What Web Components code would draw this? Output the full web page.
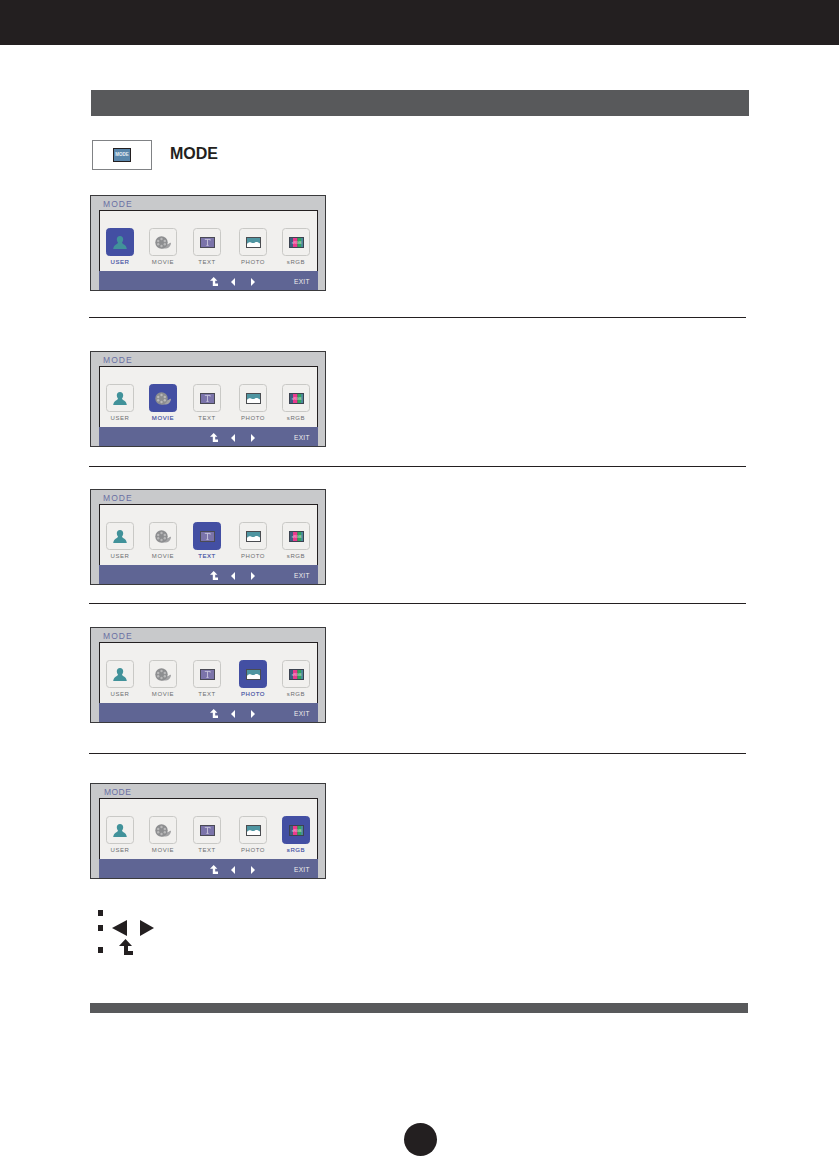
<!DOCTYPE html>
<html lang="en"><head><meta charset="utf-8"><title>MODE</title>
<style>
html,body{margin:0;padding:0;background:#fff;font-family:"Liberation Sans",Arial,sans-serif}
body{width:839px;height:1157px;overflow:hidden}
manual-page{display:block}
.m1{margin-top:25px}.s1{margin-top:26px}.m2{margin-top:33px}.s2{margin-top:19px}.m3{margin-top:22px}.s3{margin-top:18px}.m4{margin-top:23px}.s4{margin-top:30px}.m5{margin-top:29px;--title-space:.45px;--title-pad:5px}
</style></head><body>
<template id="t-tile"><style>
:host{display:flex;flex-direction:column;align-items:center;width:28px;position:relative}
.box{box-sizing:border-box;width:28px;height:28px;border:1px solid #c9c9c6;border-radius:3.5px;display:flex;align-items:center;justify-content:center;background:#f1f0ee}
:host([selected]) .box{background:#434fa3;border-color:#434fa3}
.lab{font:6px/8px "Liberation Sans",Arial,sans-serif;letter-spacing:.6px;color:#6d6e71;margin-top:2px;white-space:nowrap}
:host([selected]) .lab{color:#434fa3;-webkit-text-stroke:.15px #434fa3}
svg{display:block}
</style><div class="box"><slot></slot></div><div class="lab"></div></template>

<template id="t-osd"><style>
:host{display:block;box-sizing:border-box;width:236px;height:96px;margin-left:90px;border:1px solid #3a3a3c;background:#c8c9cb;padding:0 8px 0 8px}
.title{font:8.5px/16px "Liberation Sans",Arial,sans-serif;letter-spacing:var(--title-space,1.05px);color:#6a6fa3;height:14px;padding-left:var(--title-pad,4px)}
.panel{box-sizing:border-box;width:219px;height:80px;border:1px solid #231f20;border-bottom:0;background:#f1f0ee;display:flex;flex-direction:column}
.tiles{flex:none;padding-top:17px;padding-left:6px;display:flex;box-sizing:border-box;height:60px}
.foot{height:19px;background:#5f6594;margin:0 -1px;display:flex;align-items:center;padding-top:2px;box-sizing:border-box;position:relative;flex:none}
.foot svg{display:block;flex:none}
.up{margin-left:111px}.l{margin-left:13px}.r{margin-left:16px}
.exit{font:6.5px/8px "Liberation Sans",Arial,sans-serif;letter-spacing:.3px;color:#f1f0ee;margin-left:39px}
</style><div class="title">MODE</div><div class="panel"><div class="tiles"><slot></slot></div>
<div class="foot">
<svg class="up" width="8" height="9" viewBox="0 0 8 9"><path d="M3.7 0L7.4 3.8H5.2V6.6H8V9H2.8V3.8H0Z" fill="#fff"/></svg>
<svg class="l" width="4" height="8" viewBox="0 0 4 8"><path d="M4 0V8L0 4Z" fill="#fff"/></svg>
<svg class="r" width="4" height="8" viewBox="0 0 4 8"><path d="M0 0V8L4 4Z" fill="#fff"/></svg>
<span class="exit">EXIT</span></div></div></template>

<script>
const ICONS={
user:`<svg width="14" height="13" viewBox="0 0 14 13"><path d="M7 0C4.9 0 3.8 1.4 3.8 3.2C3.8 4.8 4.5 5.8 5 6.4C4.9 7.6 3.2 8.2 2 9.2C.9 10.1.4 11.4.2 13H13.8C13.6 11.4 13.1 10.1 12 9.2C10.8 8.2 9.1 7.6 9 6.4C9.5 5.8 10.2 4.8 10.2 3.2C10.2 1.4 9.1 0 7 0Z" fill="#41929a"/></svg>`,
movie:`<svg width="16" height="13" viewBox="0 0 16 13"><path d="M8 8C10 9 12.5 8.6 14 7.4C14.8 6.8 15.5 6.6 16 6.9C16 9.8 13.5 12.6 9.5 12.6H6.5Z" fill="#a3a3a5"/><circle cx="6.5" cy="6.5" r="6.2" fill="#8d8e90"/><g fill="#b9b9ba"><circle cx="6.5" cy="3" r="1.2"/><circle cx="6.5" cy="10" r="1.2"/><circle cx="3.2" cy="5" r="1.2"/><circle cx="9.8" cy="5" r="1.2"/><circle cx="3.2" cy="8.2" r="1.2"/><circle cx="9.8" cy="8.2" r="1.2"/></g></svg>`,
text:`<svg width="15" height="11" viewBox="0 0 15 11"><rect x=".5" y=".5" width="14" height="10" fill="#7b74aa" stroke="#4a4a55"/><path d="M4.8 2.4H10.2V3.6M7.5 2.4V8.4M6.4 8.4H8.6" fill="none" stroke="#c9c6dd" stroke-width=".9"/></svg>`,
photo:`<svg width="15" height="11" viewBox="0 0 15 11"><rect width="15" height="11" fill="#4a4c50"/><rect x="1" y="1" width="13" height="9" fill="#4f95a1"/><path d="M1 10V6.8C2 5.6 3.5 4.8 5 5.4C6.5 6 7.6 6.2 9 5.4C10.5 4.6 12.5 5.4 14 6.6V10Z" fill="#fff"/></svg>`,
srgb:`<svg width="15" height="11" viewBox="0 0 15 11"><rect width="15" height="11" fill="#3c4350"/><rect x="1" y="1" width="3" height="9" fill="#3f5f80"/><rect x="4" y="1" width="4.5" height="9" fill="#ea3a8e"/><rect x="8.5" y="1" width="3.5" height="9" fill="#2fa65c"/><rect x="12" y="1" width="2" height="9" fill="#4a8a9a"/><text x="7.5" y="6.6" text-anchor="middle" font-family="Liberation Sans" font-size="3.6" fill="#f4f4f4" opacity=".8">sRGB</text></svg>`
};
class ModeTile extends HTMLElement{
 constructor(){super();const s=this.attachShadow({mode:"open"});s.appendChild(document.getElementById("t-tile").content.cloneNode(true));}
 connectedCallback(){this.shadowRoot.querySelector(".lab").textContent=this.getAttribute("label");this.shadowRoot.querySelector(".box").innerHTML=ICONS[this.getAttribute("icon")];}
}
customElements.define("mode-tile",ModeTile);
class OsdScreen extends HTMLElement{
 constructor(){super();const s=this.attachShadow({mode:"open"});s.appendChild(document.getElementById("t-osd").content.cloneNode(true));}
 connectedCallback(){
  const sel=this.getAttribute("selected");
  const items=[["USER","user",0],["MOVIE","movie",15],["TEXT","text",16],["PHOTO","photo",18],["sRGB","srgb",15]];
  this.innerHTML="";
  for(const [l,i,g] of items){const t=document.createElement("mode-tile");t.setAttribute("label",l);t.setAttribute("icon",i);t.style.marginLeft=g+"px";if(i===sel)t.setAttribute("selected","");this.appendChild(t);}
 }
}
customElements.define("osd-screen",OsdScreen);
class TopBar extends HTMLElement{constructor(){super();this.attachShadow({mode:"open"}).innerHTML=`<style>:host{display:block;height:45px;background:#231f20}</style>`;}}
customElements.define("top-bar",TopBar);
class SectionBar extends HTMLElement{constructor(){super();this.attachShadow({mode:"open"}).innerHTML=`<style>:host{display:block;height:26px;width:658px;margin:45px 0 0 91px;background:#58595b}</style>`;}}
customElements.define("section-bar",SectionBar);
class ModeHead extends HTMLElement{constructor(){super();this.attachShadow({mode:"open"}).innerHTML=`<style>
:host{display:flex;align-items:center;height:30px;margin:24px 0 0 92px}
.btn{box-sizing:border-box;width:60px;height:30px;border:1px solid #808285;display:flex;align-items:center;justify-content:center}
.ic{box-sizing:border-box;width:18px;height:14px;border:1px solid #231f20;background:#5a86ab;color:#e8eef4;font:bold 4.5px/12px "Liberation Sans",Arial,sans-serif;text-align:center}
.t{font:bold 16px/20px "Liberation Sans",Arial,sans-serif;color:#231f20;margin-left:18px;margin-top:-3px}
</style><div class="btn"><div class="ic">MODE</div></div><div class="t">MODE</div>`;}}
customElements.define("mode-head",ModeHead);
class RuleLine extends HTMLElement{constructor(){super();this.attachShadow({mode:"open"}).innerHTML=`<style>:host{display:block;height:1px;width:657px;margin-left:89px;background:#231f20}</style>`;}}
customElements.define("rule-line",RuleLine);
class KeyLegend extends HTMLElement{constructor(){super();this.attachShadow({mode:"open"}).innerHTML=`<style>
:host{display:block;margin:25px 0 0 98px;height:54px}
.row{display:flex;align-items:center;position:relative}
.b{width:5px;height:6px;background:#231f20;flex:none}
svg{display:block;flex:none}
</style>
<div class="row" style="height:12px"><span class="b" style="margin-top:6px"></span></div>
<div class="row" style="margin-top:3px;height:17px"><span class="b"></span>
<svg style="margin-left:9px" width="15" height="16" viewBox="0 0 15 16"><path d="M15 0V16L0 8Z" fill="#231f20"/></svg>
<svg style="margin-left:13px" width="14" height="16" viewBox="0 0 14 16"><path d="M0 0V16L14 8Z" fill="#231f20"/></svg></div>
<div class="row" style="margin-top:3px;height:16px"><span class="b" style="margin-top:6px"></span>
<svg style="margin-left:16px" width="14" height="16" viewBox="0 0 14 16"><path d="M6.5 0L13 7H9V12H14V16H5V7H0Z" fill="#231f20"/></svg></div>`;}}
customElements.define("key-legend",KeyLegend);
class FootBar extends HTMLElement{constructor(){super();this.attachShadow({mode:"open"}).innerHTML=`<style>
:host{display:block}
.bar{height:10px;width:658px;margin:0 0 0 90px;background:#58595b}
.dot{width:33px;height:33px;border-radius:50%;background:#231f20;margin:110px 0 0 404px}
</style><div class="bar"></div><div class="dot"></div>`;}}
customElements.define("foot-bar",FootBar);
class ManualPage extends HTMLElement{constructor(){super();this.attachShadow({mode:"open"}).innerHTML=`<style>:host{display:block}</style><slot></slot>`;}}
customElements.define("manual-page",ManualPage);
</script>
<manual-page>
<top-bar></top-bar>
<section-bar></section-bar>
<mode-head></mode-head>
<osd-screen class="m1" selected="user"></osd-screen>
<rule-line class="s1"></rule-line>
<osd-screen class="m2" selected="movie"></osd-screen>
<rule-line class="s2"></rule-line>
<osd-screen class="m3" selected="text"></osd-screen>
<rule-line class="s3"></rule-line>
<osd-screen class="m4" selected="photo"></osd-screen>
<rule-line class="s4"></rule-line>
<osd-screen class="m5" selected="srgb"></osd-screen>
<key-legend></key-legend>
<foot-bar style="margin-top:45px"></foot-bar>
</manual-page>
</body></html>
